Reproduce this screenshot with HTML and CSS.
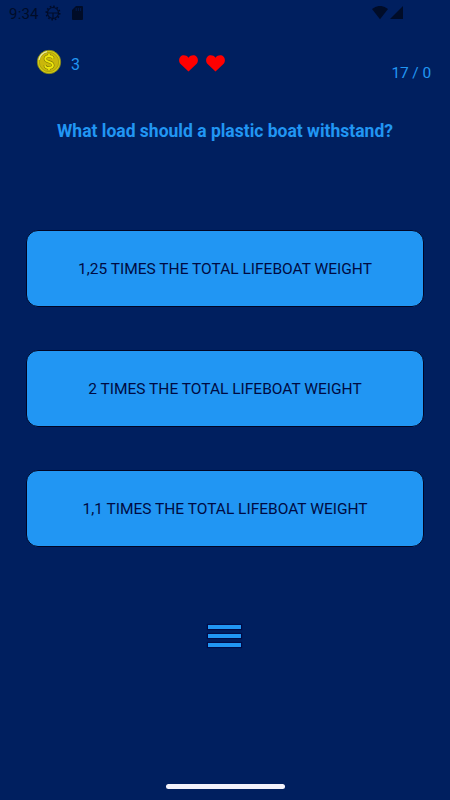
FILE: index.html
```html
<!DOCTYPE html>
<html lang="en">
<head>
<meta charset="utf-8">
<title>Lifeboat quiz</title>
<link rel="stylesheet" href="styles.css">
</head>
<body>
<div class="screen">
  <header class="status">
    <span class="clock">9:34</span>
    <svg class="gear" width="16" height="16" viewBox="0 0 16 16"><circle cx="8" cy="8" r="5.500"/><circle class="teeth" cx="8" cy="8" r="6.700"/><path d="M2.500 8h11M8 8v5"/></svg>
    <svg class="card" width="11" height="14" viewBox="0 0 11 14"><path d="M4 0h6q1 0 1 1v12q0 1-1 1H1q-1 0-1-1V4z"/><path class="pins" d="M4.200 2v3M6.400 2v3M8.600 2v3"/></svg>
    <svg class="signal" width="32" height="14" viewBox="0 0 32 14"><path d="M0 3Q8 -3.200 16 3L8 13.200z"/><path d="M31 0v13H18z"/></svg>
  </header>
  <section class="score">
    <svg class="coin" width="26" height="26" viewBox="0 0 26 26"><circle class="rim" cx="13" cy="13" r="11.700"/><circle class="face" cx="13" cy="13" r="9.700"/><path class="shine" d="M3 11A10.500 10.500 0 0 1 11 2.600"/><path class="dollar-edge" d="M17 9.500Q16.500 7 13 7T9.200 9.800Q9.200 12 13 12.800T17 16.400Q16.800 19 13 19T9 16.200M13 4.800V7M13 19V21.200"/><path class="dollar" d="M17 9.500Q16.500 7 13 7T9.200 9.800Q9.200 12 13 12.800T17 16.400Q16.800 19 13 19T9 16.200M13 4.800V7M13 19V21.200"/></svg>
    <span class="coins">3</span>
    <div class="lives">
      <svg width="19" height="17" viewBox="0 0 19 17"><path d="M9.500 16.600 1.600 9C-.5 6.700-.2 3.300 1.400 1.700 3.500-.4 7.300-.1 9.500 2.700 11.700-.1 15.500-.4 17.600 1.700 19.200 3.300 19.500 6.700 17.400 9z"/></svg>
      <svg width="19" height="17" viewBox="0 0 19 17"><path d="M9.500 16.600 1.600 9C-.5 6.700-.2 3.300 1.400 1.700 3.500-.4 7.300-.1 9.500 2.700 11.700-.1 15.500-.4 17.600 1.700 19.200 3.300 19.500 6.700 17.400 9z"/></svg>
    </div>
    <span class="progress">17 / 0</span>
  </section>
  <h1 class="question">What load should a plastic boat withstand?</h1>
  <main class="answers">
    <button class="answer">1,25 TIMES THE TOTAL LIFEBOAT WEIGHT</button>
    <button class="answer">2 TIMES THE TOTAL LIFEBOAT WEIGHT</button>
    <button class="answer">1,1 TIMES THE TOTAL LIFEBOAT WEIGHT</button>
  </main>
  <div class="menu"><i></i><i></i><i></i></div>
  <div class="home"></div>
</div>
</body>
</html>
```
FILE: styles.css
```css
* { box-sizing: border-box; }
body { margin: 0; background: #001f5f; font-family: Roboto, sans-serif; color: #2196f3; }
svg { display: block; flex: none; }
.screen { width: 450px; height: 800px; display: flex; flex-direction: column; align-items: center; overflow: hidden; }
.status { width: 100%; height: 28px; padding: 6px 46px 0 9px; display: flex; align-items: flex-start; color: #000c28; }
.clock { width: 36px; font-size: 15px; line-height: 16px; letter-spacing: .2px; }
.status svg { fill: #000c28; }
.status .gear { margin-top: -1px; fill: none; stroke: #000c28; stroke-width: 1.2; }
.gear .teeth { stroke-width: 1.6; stroke-dasharray: 1.6 1.908; }
.card { margin-left: 11px; }
.card .pins { stroke: #001f5f; stroke-width: .7; }
.signal { margin-left: auto; }
.score { width: 100%; height: 62px; display: flex; align-items: flex-start; padding: 21px 19px 0 36px; }
.rim { fill: #d5cd10; stroke: #82841c; stroke-width: .8; }
.face { fill: #c9b70b; stroke: #9c970d; stroke-width: .7; }
.shine { fill: none; stroke: #e8e5a0; stroke-width: 1.2; }
.dollar-edge { fill: none; stroke: #817b08; stroke-width: 3; }
.dollar { fill: none; stroke: #eee60b; stroke-width: 1.8; }
.coins { margin: 6px 0 0 9px; width: 20px; font-size: 16px; line-height: 20px; }
.lives { display: flex; gap: 8px; margin: 6px 0 0 88px; fill: #f00; }
.progress { margin: 14px 0 0 auto; font-size: 15.500px; line-height: 20px; letter-spacing: -.1px; white-space: nowrap; }
.question { margin: 30px 0 0; height: 22px; font-size: 17.500px; line-height: 22px; font-weight: 700; white-space: nowrap; }
.answers { width: 398px; margin-top: 87.500px; display: flex; flex-direction: column; gap: 43.400px; }
.answer { height: 77px; padding: 1px 0 0; border: 1px solid #000525; border-radius: 12px; background: #2196f3; color: #000b42; font: 400 15.500px/20px Roboto, sans-serif; white-space: nowrap; }
.menu { width: 33px; height: 23px; margin: 78px 1px 0 0; display: flex; flex-direction: column; gap: 5px; }
.menu i { height: 4px; background: #2196f3; box-shadow: 0 0 1px 1px #000c48; }
.home { width: 119px; height: 5px; margin-top: auto; margin-bottom: 11px; border-radius: 3px; background: #f3f2fb; }
```
